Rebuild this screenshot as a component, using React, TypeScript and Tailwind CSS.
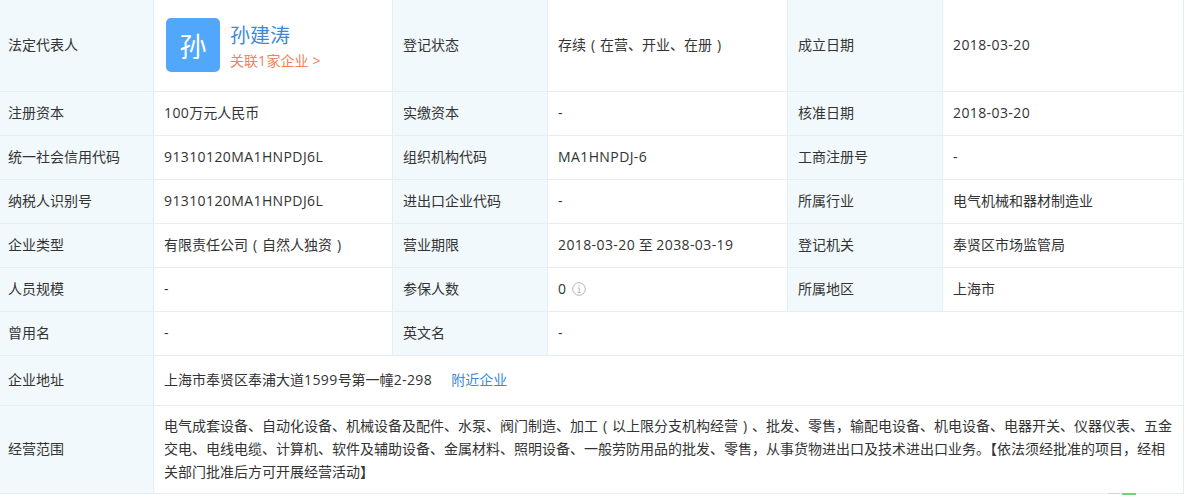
import type { ReactNode } from "react";

const B = "border border-[#e4eef6]";
const L = `${B} bg-[#f2f9fc] pl-[10px] pr-2 pb-[3px] text-[#333] align-middle`;
const V = `${B} pl-[10px] pr-0 pb-[3px] text-[#333] align-middle`;

function T({ s }: { s: string }) {
  const parts = s.split(/([0-9A-Za-z\-]+|[（）])/).filter(Boolean);
  return (
    <>
      {parts.map((p, i) =>
        p === "（" ? (
          <span key={i} className="inline-block w-[14px] text-center">(</span>
        ) : p === "）" ? (
          <span key={i} className="inline-block w-[14px] text-center">)</span>
        ) : /^[0-9A-Za-z\-]+$/.test(p) ? (
          <span key={i} className="tracking-[0.4px]">{p}</span>
        ) : (
          <span key={i}>{p}</span>
        )
      )}
    </>
  );
}

function Row({ h, c }: { h: string; c: (string | ReactNode)[] }) {
  return (
    <tr className={h}>
      {c.map((x, i) => (
        <td key={i} className={i % 2 === 0 ? L : V}>{typeof x === "string" ? <T s={x} /> : x}</td>
      ))}
    </tr>
  );
}

function Info() {
  return (
    <svg width="14" height="14" viewBox="0 0 14 14" className="inline-block ml-[6px] align-[-2px]" fill="none" stroke="#b4b4b4">
      <circle cx="7" cy="7" r="6.3" />
      <path d="M7 3.2v1.4M5.8 6h1.4v4.4M5.6 10.5h3" />
    </svg>
  );
}

export default function App() {
  return (
    <div className="relative w-[1189px] h-[495px] overflow-hidden bg-white text-[14px] leading-[23px]" style={{ fontFamily: '"Open Sans","Noto Sans CJK SC",sans-serif' }}>
      <table className="w-[1186px] table-fixed border-collapse -mt-px -ml-[3px]">
        <colgroup>
          <col className="w-[156px]" />
          <col className="w-[239px]" />
          <col className="w-[155px]" />
          <col className="w-[240px]" />
          <col className="w-[155px]" />
          <col className="w-[241px]" />
        </colgroup>
        <tbody>
          <tr className="h-[92px]">
            <td className={L}><T s="法定代表人" /></td>
            <td className={V}>
              <div className="flex items-center gap-[10px] pl-[2px] pt-[1px]">
                <div className="w-[54px] h-[54px] rounded-[5px] bg-[#51a8fb] text-white text-[27px] pt-[4px] flex items-center justify-center">孙</div>
                <div className="pt-[4px]">
                  <div className="text-[20px] leading-[26px] text-[#3b8ad8]">孙建涛</div>
                  <div className="text-[14px] leading-[20px] mt-[2px] text-[#f0825a]">
                    <T s="关联1家企业" /><span className="ml-[4px]">&gt;</span>
                  </div>
                </div>
              </div>
            </td>
            <td className={L}><T s="登记状态" /></td>
            <td className={V}><T s="存续（在营、开业、在册）" /></td>
            <td className={L}><T s="成立日期" /></td>
            <td className={V}><T s="2018-03-20" /></td>
          </tr>
          <Row h="h-[44px]" c={["注册资本", "100万元人民币", "实缴资本", "-", "核准日期", "2018-03-20"]} />
          <Row h="h-[44px]" c={["统一社会信用代码", "91310120MA1HNPDJ6L", "组织机构代码", "MA1HNPDJ-6", "工商注册号", "-"]} />
          <Row h="h-[44px]" c={["纳税人识别号", "91310120MA1HNPDJ6L", "进出口企业代码", "-", "所属行业", "电气机械和器材制造业"]} />
          <Row h="h-[44px]" c={["企业类型", "有限责任公司（自然人独资）", "营业期限", "2018-03-20 至 2038-03-19", "登记机关", "奉贤区市场监管局"]} />
          <Row h="h-[44px]" c={["人员规模", "-", "参保人数", <span>0<Info /></span>, "所属地区", "上海市"]} />
          <tr className="h-[44px]">
            <td className={L}><T s="曾用名" /></td>
            <td className={V}>-</td>
            <td className={L}><T s="英文名" /></td>
            <td className={V} colSpan={3}>-</td>
          </tr>
          <tr className="h-[50px]">
            <td className={L}><T s="企业地址" /></td>
            <td className={V} colSpan={5}>
              <T s="上海市奉贤区奉浦大道1599号第一幢2-298" />
              <span className="ml-[19px] text-[#3b8ad8]">附近企业</span>
            </td>
          </tr>
          <tr className="h-[88px]">
            <td className={L}><T s="经营范围" /></td>
            <td className={V} colSpan={5}>
              <div className="whitespace-nowrap"><T s="电气成套设备、自动化设备、机械设备及配件、水泵、阀门制造、加工（以上限分支机构经营）、批发、零售，输配电设备、机电设备、电器开关、仪器仪表、五金" /></div>
              <div className="whitespace-nowrap"><T s="交电、电线电缆、计算机、软件及辅助设备、金属材料、照明设备、一般劳防用品的批发、零售，从事货物进出口及技术进出口业务。【依法须经批准的项目，经相" /></div>
              <div className="whitespace-nowrap"><T s="关部门批准后方可开展经营活动】" /></div>
            </td>
          </tr>
        </tbody>
      </table>
      <div className="absolute left-[1108px] top-[493px] w-[12px] h-[1px] bg-[#d4d4d4]" />
      <div className="absolute left-[1122px] top-[493px] w-[14px] h-[2px] bg-[#62da7c]" />
    </div>
  );
}
